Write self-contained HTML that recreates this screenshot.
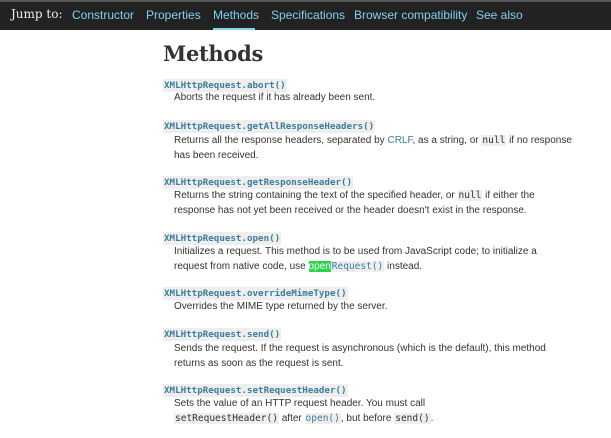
<!DOCTYPE html>
<html><head><meta charset="utf-8"><style>
body{margin:0;width:611px;height:438px;background:#fff;overflow:hidden;font-family:"Liberation Sans","DejaVu Sans",sans-serif;position:relative;color:#333}
.nav{position:absolute;left:0;top:0;width:611px;height:30px;background:#222;border-top:2px solid #555;box-sizing:border-box}
.nav span{position:absolute;top:6px;font-size:12px;color:#83d0f2}
.nav .j{color:#eee;font-family:"DejaVu Serif",serif;font-size:12px;left:11px;top:5px}
.ul{position:absolute;left:213px;top:28px;width:42px;height:2px;background:#83d0f2}
h1{position:absolute;left:163px;top:41px;margin:0;font-family:"DejaVu Serif",serif;font-weight:bold;font-size:21px;color:#333;letter-spacing:-0.3px}
.c{position:absolute;left:163px;font-family:"DejaVu Sans Mono","Liberation Mono",monospace;font-weight:bold;font-size:9.2px;color:#3d7e9a;background:#eee;padding:0 1px;line-height:13px}
.d{position:absolute;left:174px;font-size:10px;line-height:14.5px;color:#333;white-space:nowrap}
code{font-family:"DejaVu Sans Mono",monospace;font-size:9.5px;background:#eee;padding:0 1px}
.l{color:#3d7e9a}
.g{background:#2bd34b;color:#fff;padding:0}
</style></head><body>
<div class="nav">
<span class="j">Jump to:</span>
<span style="left:72px">Constructor</span>
<span style="left:146px">Properties</span>
<span style="left:213px">Methods</span>
<span style="left:271px">Specifications</span>
<span style="left:354px">Browser compatibility</span>
<span style="left:476px">See also</span>
</div>
<div class="ul"></div>
<h1>Methods</h1>
<div class="c" style="top:79px">XMLHttpRequest.abort()</div>
<div class="d" style="top:91px">Aborts the request if it has already been sent.</div>
<div class="c" style="top:120px">XMLHttpRequest.getAllResponseHeaders()</div>
<div class="d" style="top:134px">Returns all the response headers, separated by <span class="l">CRLF</span>, as a string, or <code>null</code> if no response<br>has been received.</div>
<div class="c" style="top:176px">XMLHttpRequest.getResponseHeader()</div>
<div class="d" style="top:189px">Returns the string containing the text of the specified header, or <code>null</code> if either the<br>response has not yet been received or the header doesn't exist in the response.</div>
<div class="c" style="top:232px">XMLHttpRequest.open()</div>
<div class="d" style="top:245px">Initializes a request. This method is to be used from JavaScript code; to initialize a<br>request from native code, use <span class="g">open</span><code class="l">Request()</code> instead.</div>
<div class="c" style="top:287px">XMLHttpRequest.overrideMimeType()</div>
<div class="d" style="top:300px">Overrides the MIME type returned by the server.</div>
<div class="c" style="top:328px">XMLHttpRequest.send()</div>
<div class="d" style="top:342px">Sends the request. If the request is asynchronous (which is the default), this method<br>returns as soon as the request is sent.</div>
<div class="c" style="top:384px">XMLHttpRequest.setRequestHeader()</div>
<div class="d" style="top:397px;left:174px">Sets the value of an HTTP request header. You must call<br><code>setRequestHeader()</code> after <code class="l">open()</code>, but before <code>send()</code>.</div>
</body></html>
